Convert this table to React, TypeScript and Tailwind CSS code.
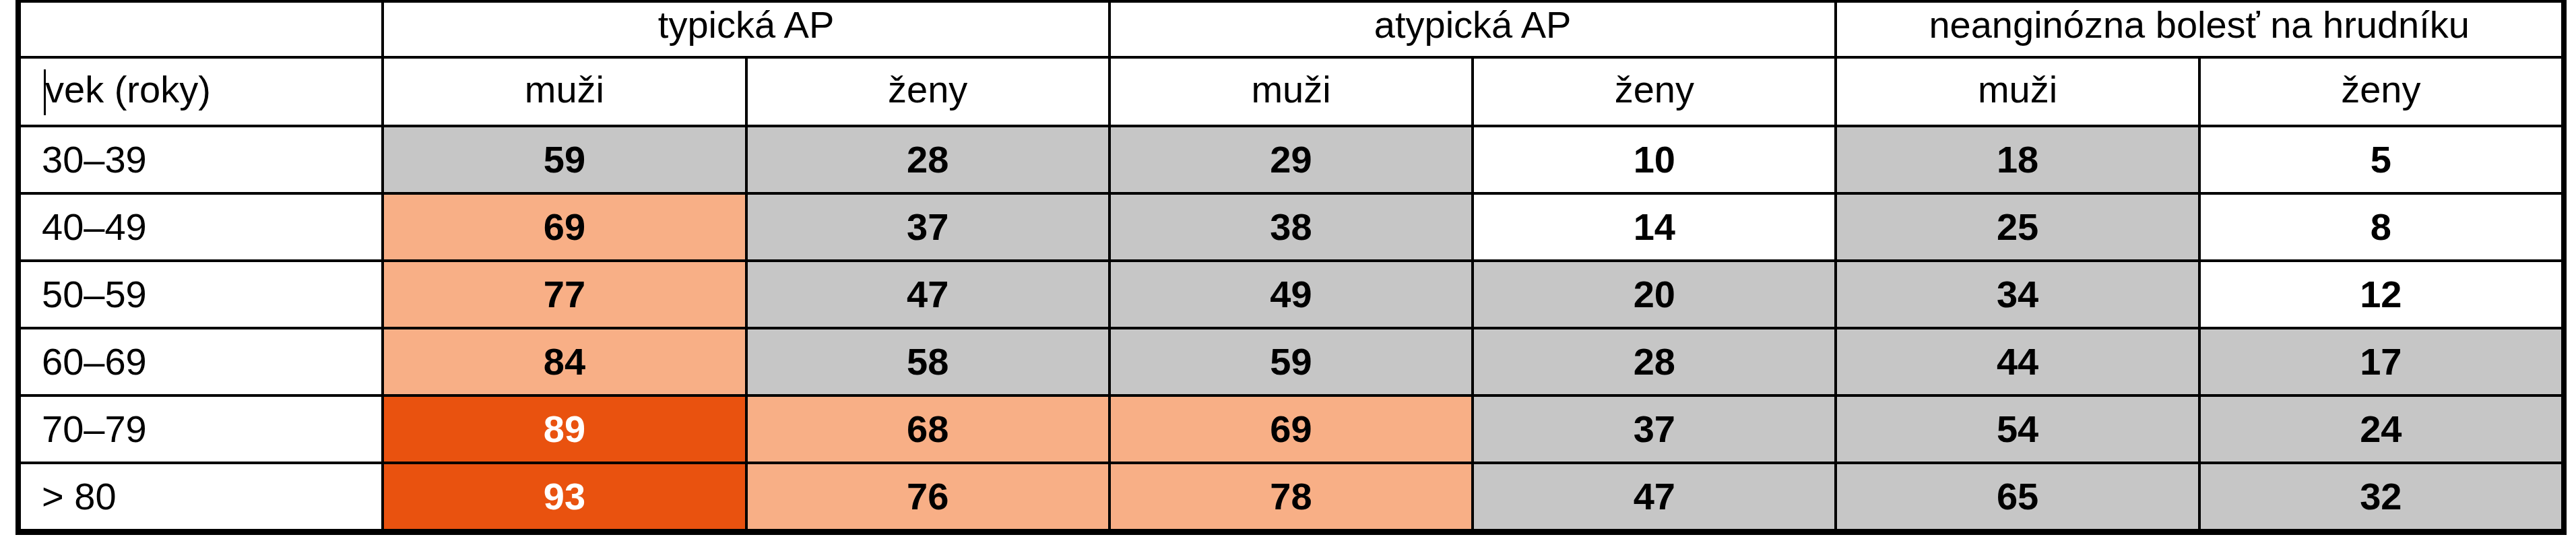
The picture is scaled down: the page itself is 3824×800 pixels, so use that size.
import React from 'react';

type Tone = 'w' | 'g' | 'l' | 'd';

const groups = ['typická AP', 'atypická AP', 'neanginózna bolesť na hrudníku'];

const rows: { age: string; cells: [number, Tone][] }[] = [
  { age: '30–39', cells: [[59, 'g'], [28, 'g'], [29, 'g'], [10, 'w'], [18, 'g'], [5, 'w']] },
  { age: '40–49', cells: [[69, 'l'], [37, 'g'], [38, 'g'], [14, 'w'], [25, 'g'], [8, 'w']] },
  { age: '50–59', cells: [[77, 'l'], [47, 'g'], [49, 'g'], [20, 'g'], [34, 'g'], [12, 'w']] },
  { age: '60–69', cells: [[84, 'l'], [58, 'g'], [59, 'g'], [28, 'g'], [44, 'g'], [17, 'g']] },
  { age: '70–79', cells: [[89, 'd'], [68, 'l'], [69, 'l'], [37, 'g'], [54, 'g'], [24, 'g']] },
  { age: '> 80', cells: [[93, 'd'], [76, 'l'], [78, 'l'], [47, 'g'], [65, 'g'], [32, 'g']] },
];

const toneClass: Record<Tone, string> = {
  w: 'bg-white text-black',
  g: 'bg-[#c6c6c6] text-black',
  l: 'bg-[#f8af86] text-black',
  d: 'bg-[#e9520f] text-white',
};

const App = () => {
  return (
    <div className="w-[3824px] h-[800px] bg-white font-['Liberation_Sans',Arial,sans-serif] text-[56px] leading-none text-black">
      <div className="ml-[23px] w-[3787px] bg-black pt-[4px] px-[8px] pb-[9px]">
        <div className="grid grid-cols-7 gap-[4px] grid-rows-[79px_98px_repeat(6,96px)]">
          {/* group header */}
          <div className="bg-white" />
          {groups.map((g) => (
            <div key={g} className="col-span-2 bg-white flex items-center justify-center pb-[14px]">
              {g}
            </div>
          ))}

          {/* sub header */}
          <div className="bg-white flex items-center pl-[34px] pb-[6px]">
            <span className="inline-block w-[3px] h-[68px] bg-black mr-[-1px] translate-y-[4px]" />
            vek (roky)
          </div>
          {groups.map((g) => (
            <React.Fragment key={g + '-sub'}>
              <div className="bg-white flex items-center justify-center pb-[6px]">muži</div>
              <div className="bg-white flex items-center justify-center pb-[6px]">ženy</div>
            </React.Fragment>
          ))}

          {/* data */}
          {rows.map((r) => (
            <React.Fragment key={r.age}>
              <div className="bg-white flex items-center pl-[31px]">{r.age}</div>
              {r.cells.map(([v, t], i) => (
                <div key={i} className={`${toneClass[t]} flex items-center justify-center font-bold`}>
                  {v}
                </div>
              ))}
            </React.Fragment>
          ))}
        </div>
      </div>
    </div>
  );
};

export default App;
